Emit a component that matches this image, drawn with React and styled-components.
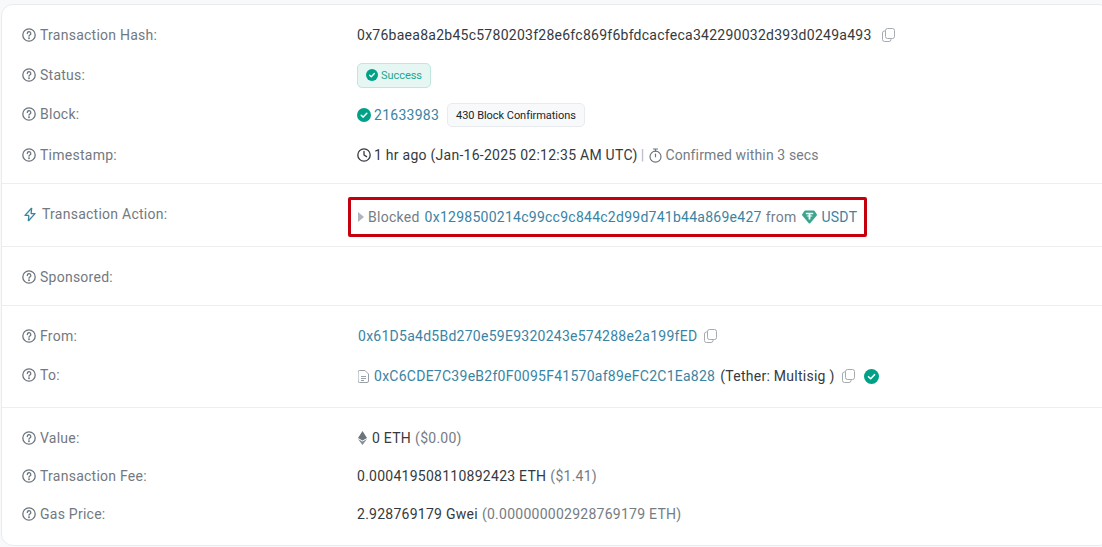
import React from "react";
import styled, { createGlobalStyle } from "styled-components";

const Global = createGlobalStyle`
  html, body { margin: 0; padding: 0; background: #fff; }
  body { width: 1102px; height: 547px; overflow: hidden; font-family: Roboto, "Liberation Sans", sans-serif; }
`;

const Page = styled.div`
  width: 1102px;
  height: 547px;
  padding-top: 4px;
  padding-left: 1px;
  box-sizing: border-box;
  background: #f8f9fa;
  overflow: hidden;
`;
const Card = styled.div`
  width: 1110px;
  height: 542px;
  box-sizing: border-box;
  background: #fff;
  border: 1px solid #e9ecef;
  border-radius: 12px;
`;
const Section = styled.div`
  padding: ${(p) => p.$top}px 0 ${(p) => p.$bottom}px 20px;
  border-bottom: ${(p) => (p.$last ? "0" : "1px solid #eceef0")};
`;
const Row = styled.div`
  display: grid;
  grid-template-columns: 335px 1fr;
  align-items: center;
  height: ${(p) => p.$h || 40}px;
`;
const Label = styled.div`
  display: flex;
  align-items: center;
  gap: 4px;
  font-size: 14px;
  letter-spacing: 0.25px;
  color: #727980;
`;
const Value = styled.div`
  display: flex;
  align-items: center;
  margin-top: ${(p) => p.$nudge || 0}px;
  font-size: 14px;
  letter-spacing: 0.26px;
  color: #343a40;
  white-space: nowrap;
`;
const Link = styled.span`
  color: #3a84a3;
  margin-left: ${(p) => p.$ml || 0}px;
`;
const Muted = styled.span`
  color: #757c83;
  margin-left: ${(p) => p.$ml || 0}px;
  letter-spacing: ${(p) => (p.$tight ? "0.13px" : "0.26px")};
`;
const Owner = styled.span`
  color: #343a40;
  margin-left: 5px;
`;
const Icon = styled.span`
  display: inline-flex;
  flex: none;
  margin: 0 ${(p) => p.$mr || 0}px 0 ${(p) => p.$ml || 0}px;
  color: ${(p) => p.$color || "#6c757d"};
`;
const StatusBadge = styled.span`
  display: inline-flex;
  align-items: center;
  gap: 3px;
  height: 25px;
  box-sizing: border-box;
  padding: 0 8px;
  font-size: 11px;
  letter-spacing: -0.05px;
  color: #1aa78f;
  background: #e6f6f3;
  border: 1px solid #bfe6df;
  border-radius: 5px;
`;
const ConfirmBadge = styled.span`
  display: inline-flex;
  align-items: center;
  height: 24px;
  box-sizing: border-box;
  padding: 0 8px;
  margin-left: 8px;
  font-size: 11px;
  letter-spacing: -0.04px;
  color: #212529;
  background: #f8f9fa;
  border: 1px solid #e9ecef;
  border-radius: 5px;
`;
const Divider = styled.span`
  color: #adb5bd;
  margin: 0 5px 0 3px;
`;
const ActionBox = styled.div`
  display: flex;
  align-items: center;
  width: 519px;
  height: 40px;
  margin: 3px 0 -3px -9px;
  padding: 0 0 1px 7px;
  box-sizing: border-box;
  border: 3px solid #c4000f;
  border-radius: 2px;
  color: #757c83;
  font-size: 14px;
  letter-spacing: 0.26px;
  white-space: nowrap;
`;

const Help = () => (
  <Icon>
    <svg width="14" height="14" viewBox="0 0 14 14" fill="none" stroke="#6c757d" strokeWidth="1.3" strokeLinecap="round">
      <circle cx="7" cy="7" r="6.2" />
      <path d="M5.3 5.5a1.75 1.75 0 1 1 2.6 1.5c-.6.35-.9.7-.9 1.2" />
      <circle cx="7" cy="10.2" r=".35" fill="#6c757d" />
    </svg>
  </Icon>
);
const Check = ({ size = 14 }) => (
  <svg width={size} height={size} viewBox="0 0 14 14">
    <circle cx="7" cy="7" r="7" fill="#00a186" />
    <path d="M4.2 7.2l2 1.9 3.6-3.8" fill="none" stroke="#fff" strokeWidth="1.5" strokeLinecap="round" strokeLinejoin="round" />
  </svg>
);
const Copy = ({ ml }) => (
  <Icon $ml={ml} $color="#a5abb1">
    <svg width="13" height="14" viewBox="0 0 13 14" fill="none" stroke="currentColor" strokeWidth="1">
      <rect x="3.5" y=".5" width="9" height="10" rx="2" />
      <path d="M3.5 3H2.5a2 2 0 0 0-2 2v6.5a2 2 0 0 0 2 2H7a2 2 0 0 0 2-2v-1" />
    </svg>
  </Icon>
);
const Bolt = () => (
  <Icon $ml={1} $mr={1} $color="#3a84a3">
    <svg width="14" height="15" viewBox="0 0 14 15" fill="none" stroke="currentColor" strokeWidth="1.3" strokeLinejoin="round">
      <path d="M8.7 1L2 8.4h3.9M5.3 14l6.7-7.4H8.1L8.7 1M5.3 14l.6-5.6" />
    </svg>
  </Icon>
);
const Clock = () => (
  <Icon $mr={3} $color="#343a40">
    <svg width="14" height="14" viewBox="0 0 14 14" fill="none" stroke="currentColor" strokeWidth="1.3" strokeLinecap="round" strokeLinejoin="round">
      <circle cx="7" cy="7" r="6.2" />
      <path d="M7 3.4V7l2.6 1.6" />
    </svg>
  </Icon>
);
const Stopwatch = () => (
  <Icon $mr={3}>
    <svg width="13" height="15" viewBox="0 0 13 15" fill="none" stroke="currentColor" strokeWidth="1.2" strokeLinecap="round">
      <circle cx="6.5" cy="8.7" r="5.5" />
      <path d="M4.5 1h4M6.5 1v2.2M6.5 6v2.7" />
    </svg>
  </Icon>
);
const Caret = () => (
  <Icon $mr={4} $color="#adb5bd">
    <svg width="6" height="10" viewBox="0 0 6 10">
      <path d="M0 0l6 5-6 5z" fill="currentColor" />
    </svg>
  </Icon>
);
const Tether = () => (
  <Icon $ml={6} $mr={4} $color="#3aa58c">
    <svg width="15" height="14" viewBox="0 0 15 14">
      <path d="M3.2.5h8.600a1 1 0 0 1 .8.4L14.800 4.300a1 1 0 0 1-.1 1.200L8.200 13.200a1 1 0 0 1-1.400 0L.3 5.500a1 1 0 0 1-.1-1.200L2.400.9a1 1 0 0 1 .8-.4z" fill="currentColor" />
      <path d="M3.800 2.800h7.400v1.500H8.400v1.100c1.300.1 2.400.3 2.400.6s-1.100.5-2.400.6v2.900H6.600V6.600c-1.300-.1-2.400-.3-2.400-.6s1.100-.5 2.400-.6V4.300H3.800z" fill="#fff" />
    </svg>
  </Icon>
);
const Doc = () => (
  <Icon $ml={1} $mr={5} $color="#9aa1a8">
    <svg width="11" height="13" viewBox="0 0 11 13" fill="none" stroke="currentColor" strokeWidth="1">
      <path d="M1.500.5h5.500l3.500 3.500v7a1.500 1.500 0 0 1-1.500 1.500h-7.500a1.500 1.500 0 0 1-1.500-1.500V2a1.500 1.500 0 0 1 1.500-1.500z" />
      <path d="M3 6.500h5M3 8.500h5M3 10.500h3" />
    </svg>
  </Icon>
);
const Eth = () => (
  <Icon $ml={1} $mr={5}>
    <svg width="9" height="14" viewBox="0 0 9 14">
      <path d="M4.500 0L9 7 4.500 9.600 0 7z" fill="#6c757d" />
      <path d="M0 8l4.500 6L9 8 4.500 10.600z" fill="#868e96" />
    </svg>
  </Icon>
);

export default function App() {
  return (
    <Page>
      <Global />
      <Card>
        <Section $top={10} $bottom={6}>
          <Row>
            <Label><Help />Transaction Hash:</Label>
            <Value>
              0x76baea8a2b45c5780203f28e6fc869f6bfdcacfeca342290032d393d0249a493
              <Copy ml={10} />
            </Value>
          </Row>
          <Row>
            <Label><Help />Status:</Label>
            <Value><StatusBadge><Check size={12} />Success</StatusBadge></Value>
          </Row>
          <Row $h={38}>
            <Label><Help />Block:</Label>
            <Value $nudge={2}>
              <Check size={14} />
              <Link $ml={3}>21633983</Link>
              <ConfirmBadge>430 Block Confirmations</ConfirmBadge>
            </Value>
          </Row>
          <Row $h={44}>
            <Label><Help />Timestamp:</Label>
            <Value>
              <Clock />1 hr ago (Jan-16-2025 02:12:35 AM UTC)
              <Divider>|</Divider>
              <Stopwatch /><Muted $tight>Confirmed within 3 secs</Muted>
            </Value>
          </Row>
        </Section>
        <Section $top={10} $bottom={12}>
          <Row>
            <Label><Bolt />Transaction Action:</Label>
            <ActionBox>
              <Caret />Blocked
              <Link $ml={5}>0x1298500214c99cc9c844c2d99d741b44a869e427</Link>
              <Muted $ml={4}>from</Muted>
              <Tether />
              <Link>USDT</Link>
            </ActionBox>
          </Row>
        </Section>
        <Section $top={10} $bottom={8}>
          <Row>
            <Label><Help />Sponsored:</Label>
            <Value />
          </Row>
        </Section>
        <Section $top={10} $bottom={13}>
          <Row>
            <Label><Help />From:</Label>
            <Value>
              <Link $ml={1}>0x61D5a4d5Bd270e59E9320243e574288e2a199fED</Link>
              <Copy ml={7} />
            </Value>
          </Row>
          <Row $h={38}>
            <Label><Help />To:</Label>
            <Value $nudge={2}>
              <Doc />
              <Link>0xC6CDE7C39eB2f0F0095F41570af89eFC2C1Ea828</Link>
              <Owner>(Tether: Multisig )</Owner>
              <Copy ml={7} />
              <Icon $ml={9}><Check size={15} /></Icon>
            </Value>
          </Row>
        </Section>
        <Section $top={11} $bottom={10} $last>
          <Row $h={38}>
            <Label><Help />Value:</Label>
            <Value><Eth />0 ETH <Muted $ml={4}>($0.00)</Muted></Value>
          </Row>
          <Row $h={38}>
            <Label><Help />Transaction Fee:</Label>
            <Value>0.000419508110892423 ETH <Muted $ml={4}>($1.41)</Muted></Value>
          </Row>
          <Row $h={38}>
            <Label><Help />Gas Price:</Label>
            <Value>2.928769179 Gwei <Muted $ml={4}>(0.000000002928769179 ETH)</Muted></Value>
          </Row>
        </Section>
      </Card>
    </Page>
  );
}
